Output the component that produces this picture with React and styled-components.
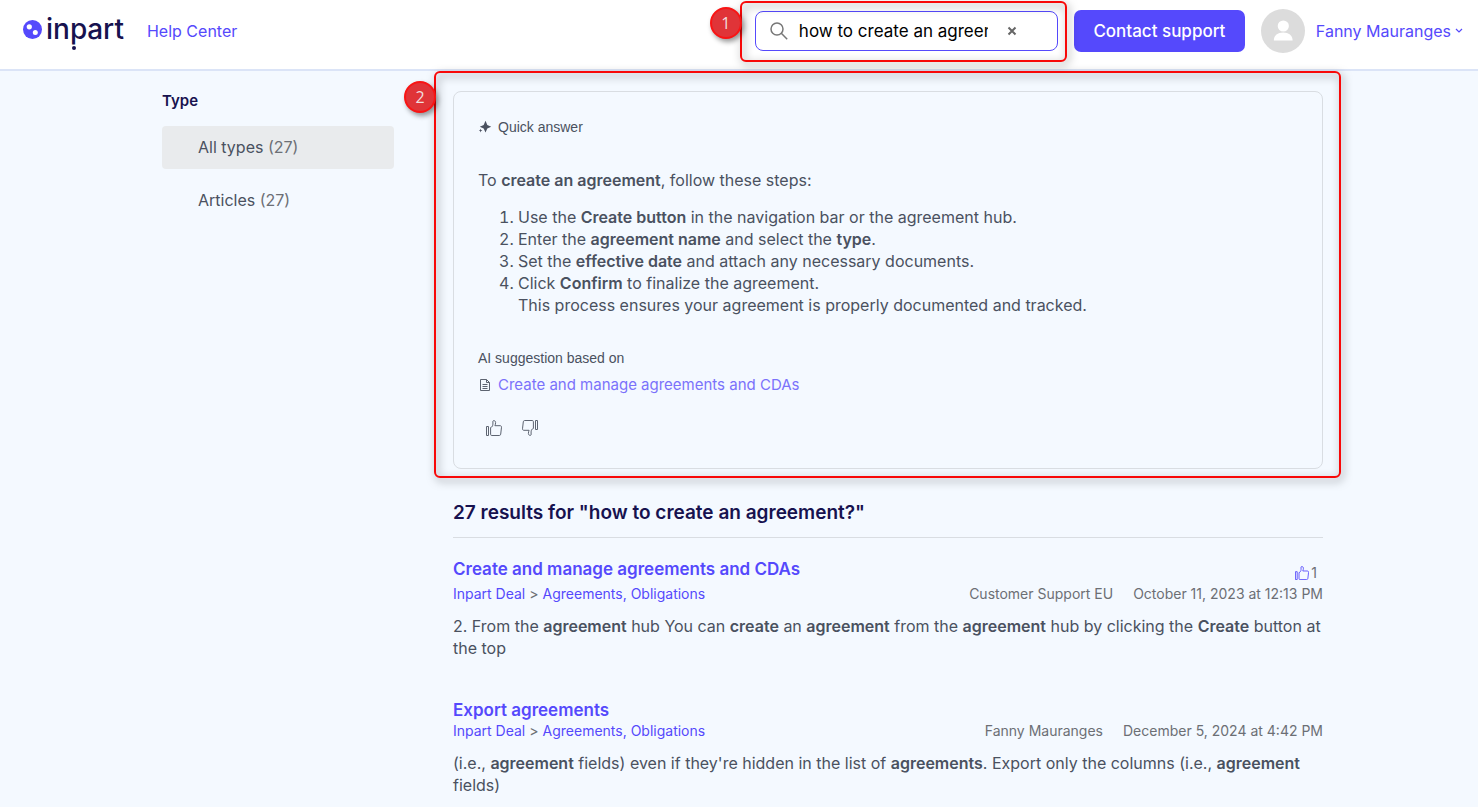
import React, { useState } from 'react'
import styled, { createGlobalStyle } from 'styled-components'

const GlobalStyle = createGlobalStyle`
    :root {
        --purple: #5549fc;
        --navy: #17124f;
        --text: #4a5160;
        --grey: #6c6f75;
        --line: #d9dde2;
    }
    * {
        box-sizing: border-box;
    }
    html {
        overflow: hidden;
        background-color: #f4f9ff;
    }
    body {
        margin: 0;
        font-family: Inter, "Liberation Sans", sans-serif;
        font-size: 16px;
        line-height: 22px;
        color: var(--text);
    }
    a {
        color: var(--purple);
        text-decoration: none;
    }
    button, input {
        font-family: inherit;
    }
    b {
        font-weight: 600;
    }
`

const results = [
    {
        title: 'Create and manage agreements and CDAs',
        votes: 1,
        author: 'Customer Support EU',
        date: 'October 11, 2023 at 12:13 PM',
        excerpt: (
            <>
                2. From the <b>agreement</b> hub You can <b>create</b> an <b>agreement</b> from the <b>agreement</b> hub by clicking the <b>Create</b> button at the top
            </>
        ),
    },
    {
        title: 'Export agreements',
        votes: 0,
        author: 'Fanny Mauranges',
        date: 'December 5, 2024 at 4:42 PM',
        excerpt: (
            <>
                (i.e., <b>agreement</b> fields) even if they're hidden in the list of <b>agreements</b>. Export only the columns (i.e., <b>agreement</b> fields)
            </>
        ),
    },
]

const Thumb = ({ size = 16, down }) => (
    <svg width={size} height={size} viewBox="0 0 16 16" fill="none" stroke="currentColor" strokeLinejoin="round" aria-hidden="true">
        <g transform={down ? 'rotate(180 8 8)' : undefined}>
            <path d="M.5 6.5h2v9h-2z" />
            <path d="M4.600 7.500c1.700-.4 2.300-1.900 2.300-3.400V1.200c0-.9 2.700-1 2.700 1.300 0 1.200-.3 2.200-.7 3.200h5.200c1 0 1.500.7 1.400 1.500l-.8 7c-.1.800-.6 1.300-1.400 1.300H5.800c-.8 0-1.200-.4-1.200-1.100z" />
        </g>
    </svg>
)

const Logo = () => (
    <LogoLink href="#home" aria-label="inpart">
        <svg width="19" height="19" viewBox="0 0 19 19" aria-hidden="true">
            <circle cx="9.500" cy="9.500" r="9.500" fill="#5549fc" />
            <circle cx="6.300" cy="6.800" r="2.600" fill="#fff" />
            <circle cx="12.300" cy="12.500" r="2.500" fill="#fff" />
        </svg>
        <span>
            in<i>p</i>art
        </span>
    </LogoLink>
)

const Result = ({ item }) => (
    <ResultItem>
        <ResultTop>
            <h3><a href="#article">{item.title}</a></h3>
            {item.votes > 0 && (
                <Votes>
                    <Thumb size={14} />
                    <span>{item.votes}</span>
                </Votes>
            )}
        </ResultTop>
        <Meta>
            <nav>
                <a href="#deal">Inpart Deal</a>
                <span>&gt;</span>
                <a href="#agreements">Agreements, Obligations</a>
            </nav>
            <div>
                <span>{item.author}</span>
                <span>{item.date}</span>
            </div>
        </Meta>
        <p>{item.excerpt}</p>
    </ResultItem>
)

const App = () => {
    const [query, setQuery] = useState('how to create an agreement?')

    return (
        <>
            <GlobalStyle />
            <Header>
                <Logo />
                <HelpLink href="#help">Help Center</HelpLink>
                <Search role="search">
                    <svg width="18" height="18" viewBox="0 0 18 18" fill="none" stroke="#777" strokeWidth="1.500" aria-hidden="true">
                        <circle cx="7" cy="7" r="6" />
                        <path d="M11.300 11.300 17.200 17.200" />
                    </svg>
                    <input type="text" aria-label="Search" value={query} onChange={e => setQuery(e.target.value)} />
                    <button type="button" aria-label="Clear search" onClick={() => setQuery('')}>
                        <svg width="10" height="10" viewBox="0 0 10 10" stroke="#666" strokeWidth="2" aria-hidden="true">
                            <path d="m1.500 1.500 7 7m0-7-7 7" />
                        </svg>
                    </button>
                    <Frame $inset="-11px -10px -12px -16px" />
                    <Badge $top="-5px" $left="-46px">1</Badge>
                </Search>
                <Contact type="button">Contact support</Contact>
                <User type="button">
                    <svg width="44" height="44" viewBox="0 0 44 44" aria-hidden="true">
                        <circle cx="22" cy="22" r="22" fill="#dcdcdc" />
                        <circle cx="22.300" cy="17" r="5.600" fill="#fff" />
                        <path d="M12.800 31.500c0-5.300 4-8 9.400-8s9.400 2.700 9.400 8z" fill="#fff" />
                    </svg>
                    <span>Fanny Mauranges</span>
                    <svg width="8" height="6" viewBox="0 0 8 6" fill="none" stroke="currentColor" strokeWidth="1.200" aria-hidden="true">
                        <path d="m1 1 3 3 3-3" />
                    </svg>
                </User>
            </Header>
            <Page>
                <Sidebar>
                    <h2>Type</h2>
                    <FilterLink href="#all" $active>All types <span>(27)</span></FilterLink>
                    <FilterLink href="#articles">Articles <span>(27)</span></FilterLink>
                </Sidebar>
                <Main>
                    <Answer>
                        <Label>
                            <svg width="14" height="14" viewBox="0 0 14 14" fill="currentColor" aria-hidden="true">
                                <path d="M7.500 .8 9.300 4.900 13.200 6.700 9.300 8.500 7.500 12.600 5.700 8.500 1.800 6.700 5.700 4.900z" />
                                <path d="m2.600 8.800.5 1.300 1.300.5-1.300.5-.5 1.300-.5-1.300-1.300-.5 1.300-.5z" />
                            </svg>
                            Quick answer
                        </Label>
                        <AnswerText>
                            <p>To <b>create an agreement</b>, follow these steps:</p>
                            <ol>
                                <li>Use the <b>Create button</b> in the navigation bar or the agreement hub.</li>
                                <li>Enter the <b>agreement name</b> and select the <b>type</b>.</li>
                                <li>Set the <b>effective date</b> and attach any necessary documents.</li>
                                <li>
                                    Click <b>Confirm</b> to finalize the agreement.<br />
                                    This process ensures your agreement is properly documented and tracked.
                                </li>
                            </ol>
                        </AnswerText>
                        <Label>AI suggestion based on</Label>
                        <Source href="#source">
                            <svg width="14" height="14" viewBox="0 0 14 14" fill="none" stroke="#5d6471" aria-hidden="true">
                                <path d="M2.500 1.500h6l3 3v8h-9z" />
                                <path d="M8.500 1.500v3h3M4.500 6.500h5M4.500 8.500h5M4.500 10.500h5" />
                            </svg>
                            Create and manage agreements and CDAs
                        </Source>
                        <Feedback>
                            <button type="button" aria-label="Helpful"><Thumb /></button>
                            <button type="button" aria-label="Not helpful"><Thumb down /></button>
                        </Feedback>
                        <Frame $inset="-21px -19px -10px -20px" />
                        <Badge $top="-11px" $left="-50px">2</Badge>
                    </Answer>
                    <ResultsTitle>27 results for "how to create an agreement?"</ResultsTitle>
                    <ResultList>
                        {results.map(item => <Result key={item.title} item={item} />)}
                    </ResultList>
                </Main>
            </Page>
        </>
    )
}

const Header = styled.header`
    display: flex;
    align-items: center;
    padding: 9px 15px 16px 23px;
    background-color: #fff;
    border-bottom: 2px solid #dbe4f7;
`

const LogoLink = styled.a`
    display: flex;
    align-items: center;
    gap: 4px;
    padding-bottom: 4px;
    color: var(--navy);
    span {
        font-size: 28px;
        font-weight: 500;
        line-height: 32px;
    }
    i {
        position: relative;
        font-style: normal;
        &::after {
            content: "";
            position: absolute;
            left: 2px;
            bottom: -4px;
            width: 4px;
            height: 4px;
            border-radius: 50%;
            background-color: var(--navy);
        }
    }
`

const HelpLink = styled.a`
    margin-left: 23px;
`

const Search = styled.form`
    position: relative;
    display: flex;
    align-items: center;
    width: 303px;
    height: 40px;
    margin-left: auto;
    padding: 0 14px;
    border: 1px solid var(--purple);
    border-radius: 8px;
    background-color: #fff;
    input {
        width: 189px;
        margin-left: 11px;
        padding: 0;
        border: 0;
        outline: 0;
        background: none;
        font-size: 17px;
        color: #000;
    }
    button {
        display: flex;
        margin-left: 14px;
        padding: 5px;
        border: 0;
        background: none;
        cursor: pointer;
    }
`

const Frame = styled.div`
    position: absolute;
    inset: ${({ $inset }) => $inset};
    z-index: 2;
    border: 2px solid #f80808;
    border-radius: 6px;
    filter: drop-shadow(2px 3px 4px rgba(0, 0, 0, 0.5));
    pointer-events: none;
`

const Badge = styled.span`
    position: absolute;
    top: ${({ $top }) => $top};
    left: ${({ $left }) => $left};
    z-index: 3;
    width: 32px;
    height: 32px;
    border: 2px solid #f91414;
    border-radius: 50%;
    background-color: #e03438;
    box-shadow: 2px 3px 5px rgba(0, 0, 0, 0.4);
    font-family: "Open Sans", sans-serif;
    font-size: 16px;
    line-height: 28px;
    text-align: center;
    color: #f0dede;
`

const Contact = styled.button`
    min-width: 171px;
    height: 42px;
    margin-left: 16px;
    padding: 0 16px;
    border: 0;
    border-radius: 7px;
    background-color: var(--purple);
    font-size: 17px;
    font-weight: 500;
    color: #fff;
    cursor: pointer;
`

const User = styled.button`
    display: flex;
    align-items: center;
    margin-left: 16px;
    padding: 0;
    border: 0;
    background: none;
    font-size: 16px;
    line-height: 22px;
    color: var(--purple);
    cursor: pointer;
    span {
        margin: 0 4px 0 11px;
    }
`

const Page = styled.div`
    display: flex;
    gap: 59px;
    max-width: 1168px;
    margin: 0 auto;
    padding: 20px 0 0 7px;
`

const Sidebar = styled.aside`
    display: flex;
    flex: 0 0 232px;
    flex-direction: column;
    gap: 10px;
    h2 {
        margin: 0;
        padding-bottom: 5px;
        font-size: 15px;
        font-weight: 600;
        line-height: 20px;
        color: var(--navy);
    }
`

const FilterLink = styled.a`
    padding: 10px 36px 11px;
    border-radius: 4px;
    background-color: ${({ $active }) => ($active ? '#e9ebed' : 'transparent')};
    color: var(--text);
    span {
        color: var(--grey);
    }
`

const Main = styled.main`
    flex: 1;
    min-width: 0;
`

const Answer = styled.section`
    position: relative;
    padding: 24px;
    border: 1px solid var(--line);
    border-radius: 8px;
`

const Label = styled.div`
    display: flex;
    align-items: center;
    gap: 6px;
    font-family: "Liberation Sans", Arial, sans-serif;
    font-size: 14px;
`

const AnswerText = styled.div`
    margin: 31px 0;
    p {
        margin: 0 0 15px;
    }
    ol {
        margin: 0;
        padding-left: 40px;
    }
`

const Source = styled.a`
    display: flex;
    align-items: center;
    gap: 6px;
    margin-top: 5px;
    font-size: 15px;
    color: #7b72fb;
`

const Feedback = styled.div`
    display: flex;
    gap: 4px;
    margin-top: 16px;
    button {
        display: flex;
        padding: 8px;
        border: 0;
        background: none;
        color: #5d6471;
        cursor: pointer;
    }
`

const ResultsTitle = styled.h1`
    margin: 33px 0 20px;
    padding-bottom: 13px;
    border-bottom: 1px solid var(--line);
    font-size: 19px;
    font-weight: 600;
    line-height: 22px;
    color: var(--navy);
`

const ResultList = styled.ul`
    display: grid;
    gap: 40px;
    margin: 0;
    padding: 0;
    list-style: none;
`

const ResultItem = styled.li`
    p {
        margin: 11px 0 0;
    }
`

const ResultTop = styled.div`
    display: flex;
    justify-content: space-between;
    h3 {
        margin: 0;
        font-size: 17px;
        font-weight: 600;
        line-height: 22px;
    }
`

const Votes = styled.span`
    display: flex;
    align-items: center;
    gap: 2px;
    padding: 4px 6px 0 0;
    font-size: 14px;
    color: var(--grey);
    svg {
        color: var(--purple);
    }
`

const Meta = styled.div`
    display: flex;
    justify-content: space-between;
    font-size: 14px;
    line-height: 20px;
    color: var(--grey);
    nav {
        display: flex;
        gap: 4px;
    }
    div {
        display: flex;
        gap: 20px;
    }
`

export default App
